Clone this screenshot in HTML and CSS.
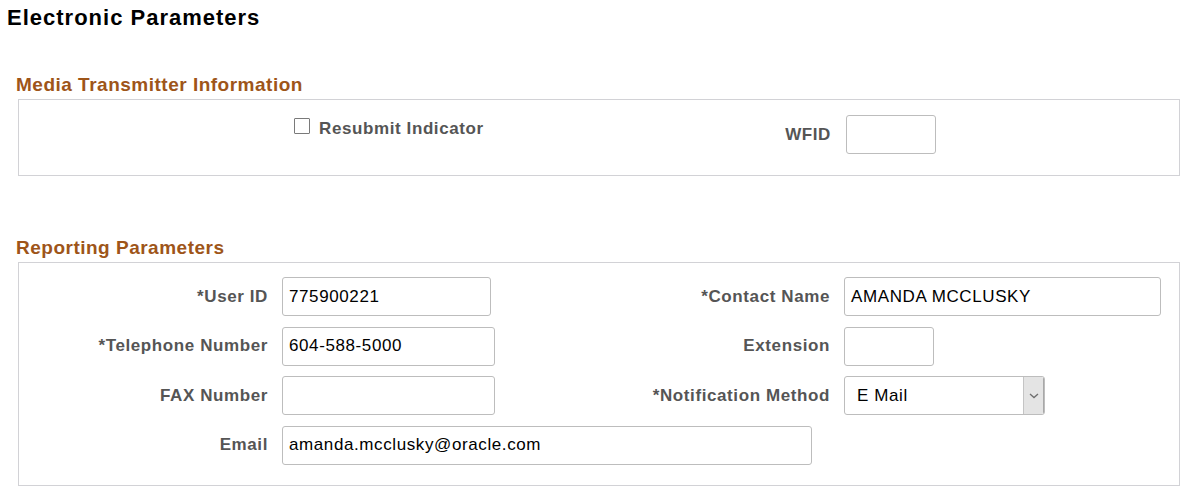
FILE: index.html
```html
<!DOCTYPE html>
<html lang="en">
<head>
<meta charset="utf-8">
<title>Electronic Parameters</title>
<link rel="stylesheet" href="styles.css">
</head>
<body>
<div class="page">
  <h1 class="title">Electronic Parameters</h1>

  <h2 class="section-title first">Media Transmitter Information</h2>
  <div class="box media">
    <div class="spacer"></div>
    <div class="check-cell">
      <span class="checkbox"></span>
      <span class="check-label">Resubmit Indicator</span>
    </div>
    <div class="label">WFID</div>
    <div class="input w90"></div>
  </div>

  <h2 class="section-title second">Reporting Parameters</h2>
  <div class="box report">
    <div class="label">*User ID</div>
    <div class="input w209">775900221</div>
    <div class="label">*Contact Name</div>
    <div class="input w317">AMANDA MCCLUSKY</div>

    <div class="label">*Telephone Number</div>
    <div class="input w213">604-588-5000</div>
    <div class="label">Extension</div>
    <div class="input w90"></div>

    <div class="label">FAX Number</div>
    <div class="input w213"></div>
    <div class="label">*Notification Method</div>
    <div class="select w201">
      <span class="select-text">E Mail</span>
      <span class="select-btn">
        <svg width="10" height="6" viewBox="0 0 10 6"><path d="M1 1 L5 4.6 L9 1" fill="none" stroke="#6f6f6f" stroke-width="1.3"/></svg>
      </span>
    </div>

    <div class="label">Email</div>
    <div class="input w530 span2">amanda.mcclusky@oracle.com</div>
  </div>
</div>
</body>
</html>
```
FILE: styles.css
```css
* { box-sizing: border-box; }
html, body { margin: 0; padding: 0; background: #fff; }
body { font-family: "Liberation Sans", Arial, sans-serif; color: #000; }

.page {
  width: 1199px;
  padding: 5px 19px 0 7px;
}

.title {
  margin: 0;
  font-size: 22px;
  line-height: 26px;
  font-weight: bold;
  letter-spacing: 1px;
  color: #000;
}

.section-title {
  margin: 0 0 3px 9px;
  font-size: 19px;
  line-height: 22px;
  font-weight: bold;
  letter-spacing: 0.5px;
  color: #9e5519;
}
.section-title.first { margin-top: 43px; }
.section-title.second { margin-top: 61px; }

.box {
  margin-left: 11px;
  border: 1px solid #d2d2d6;
  display: grid;
  align-items: center;
}

.media {
  padding: 15px 0 21px 0;
  grid-template-columns: 275px 260px 292px 90px;
  align-items: start;
}
.media .label {
  padding-right: 15px;
  height: 39px;
  display: flex;
  align-items: center;
  justify-content: flex-end;
}

.check-cell {
  display: flex;
  align-items: flex-start;
  gap: 9px;
}
.checkbox {
  width: 16px;
  height: 16px;
  margin-top: 3px;
  border: 1.5px solid #7a7a7a;
  border-radius: 1px;
  background: #fff;
  flex: none;
}
.check-label {
  margin-top: 4px;
  font-size: 17px;
  line-height: 20px;
  font-weight: bold;
  letter-spacing: 0.6px;
  color: #555;
}

.report {
  padding: 14px 0 20px 0;
  grid-template-columns: 249px 213px 321px 317px;
  column-gap: 14px;
  row-gap: 10.67px;
}

.label {
  font-size: 17px;
  line-height: 20px;
  font-weight: bold;
  letter-spacing: 0.6px;
  color: #555;
  text-align: right;
  white-space: nowrap;
}

.input {
  height: 39px;
  border: 1px solid #bdbdbd;
  border-radius: 3px;
  background: #fff;
  padding: 0 6px;
  display: flex;
  align-items: center;
  font-size: 17px;
  letter-spacing: 0.6px;
  color: #000;
  white-space: nowrap;
}

.w90 { width: 90px; }
.w201 { width: 201px; }
.w209 { width: 209px; }
.w213 { width: 213px; }
.w317 { width: 317px; }
.w530 { width: 530px; }
.span2 { grid-column: 2 / span 3; }

.select {
  height: 39px;
  border: 1px solid #bdbdbd;
  border-radius: 3px;
  background: #fff;
  display: flex;
  align-items: stretch;
  overflow: hidden;
}
.select-text {
  flex: 1;
  display: flex;
  align-items: center;
  padding-left: 12px;
  font-size: 17px;
  letter-spacing: 0.6px;
  color: #000;
}
.select-btn {
  width: 21px;
  background: #e4e4e4;
  border-left: 1px solid #c4c4c4;
  border-right: 1px solid #a8a8a8;
  display: flex;
  align-items: center;
  justify-content: center;
}
```
